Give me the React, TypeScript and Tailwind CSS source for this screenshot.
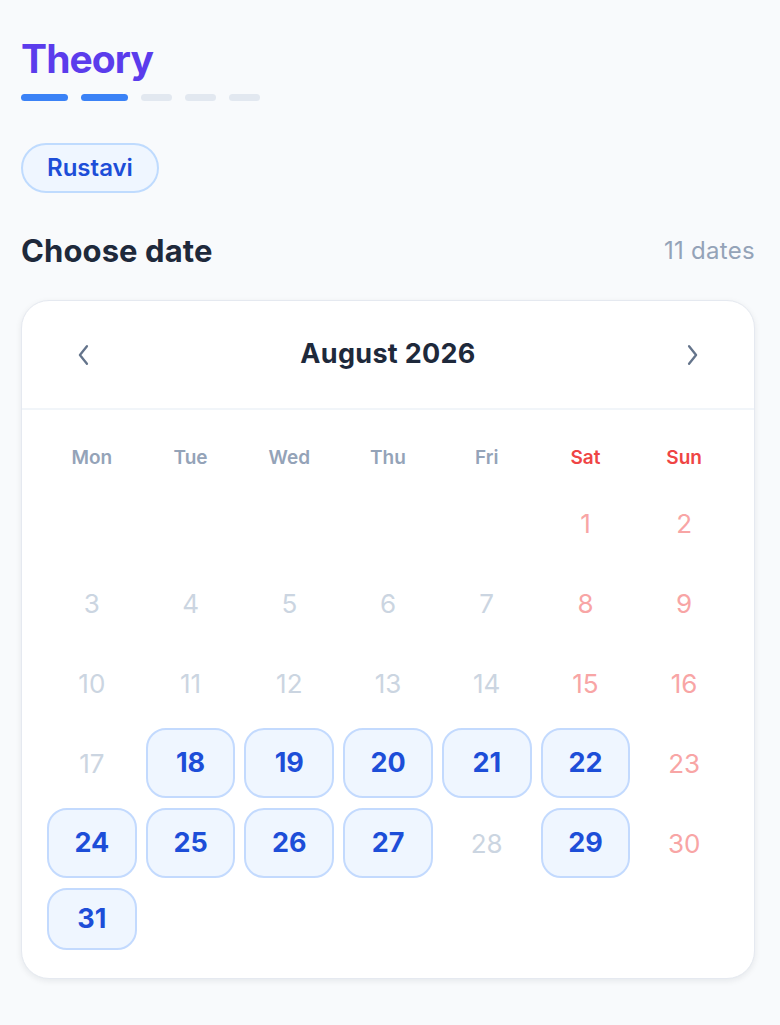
import React from "react";

const weekdays = ["Mon", "Tue", "Wed", "Thu", "Fri", "Sat", "Sun"];
const available = new Set([18, 19, 20, 21, 22, 24, 25, 26, 27, 29, 31]);

export default function App() {
  const cells: (number | null)[] = [null, null, null, null, null];
  for (let d = 1; d <= 31; d++) cells.push(d);
  return (
    <div
      className="min-h-[1025px] w-[780px] bg-[#f8fafc] pl-[21px] pr-[25px] pt-[36px]"
      style={{ fontFamily: "Inter, 'Noto Sans', sans-serif" }}
    >
      <h1 className="text-[39px] leading-[46px] font-bold tracking-[-0.9px] text-[#5b3cec]">Theory</h1>
      <div className="mt-[12px] flex gap-[13px]">
        <div className="h-[7px] w-[47px] rounded-full bg-[#3b82f6]" />
        <div className="h-[7px] w-[47px] rounded-full bg-[#3b82f6]" />
        <div className="h-[7px] w-[31px] rounded-full bg-[#e2e8f0]" />
        <div className="h-[7px] w-[31px] rounded-full bg-[#e2e8f0]" />
        <div className="h-[7px] w-[31px] rounded-full bg-[#e2e8f0]" />
      </div>
      <div className="mt-[42px] flex">
        <div className="flex h-[50px] items-center rounded-full border-2 border-[#bfdbfe] bg-[#eff6ff] px-[24px] text-[24px] font-semibold text-[#1d4ed8]">
          Rustavi
        </div>
      </div>
      <div className="mt-[38px] flex items-center justify-between">
        <h2 className="text-[31px] leading-[40px] font-bold tracking-[0.1px] text-[#1e293b]">Choose date</h2>
        <span className="text-[24px] tracking-[0.3px] text-[#94a3b8]">11 dates</span>
      </div>
      <div className="mt-[29px] rounded-[28px] border border-[#e5e9f0] bg-white shadow-[0_2px_6px_rgba(15,23,42,0.08)]">
        <div className="flex h-[109px] items-center justify-between border-b-2 border-[#f1f5f9] px-[40px]">
          <button className="flex h-[44px] w-[44px] items-center justify-center text-[#64748b]">
            <svg width="28" height="28" viewBox="0 0 24 24" fill="none" stroke="currentColor" strokeWidth="2" strokeLinecap="round" strokeLinejoin="round">
              <path d="M14.5 4.5l-6 7.5 6 7.5" />
            </svg>
          </button>
          <div className="text-[27px] font-bold tracking-[0.3px] text-[#1e293b]">August 2026</div>
          <button className="flex h-[44px] w-[44px] items-center justify-center text-[#64748b]">
            <svg width="28" height="28" viewBox="0 0 24 24" fill="none" stroke="currentColor" strokeWidth="2" strokeLinecap="round" strokeLinejoin="round">
              <path d="M9.5 4.5l6 7.5-6 7.5" />
            </svg>
          </button>
        </div>
        <div className="px-[25px] pt-[36px] pb-[28px]">
          <div className="grid grid-cols-7 gap-x-[9px]">
            {weekdays.map((w, i) => (
              <div
                key={w}
                className={
                  "text-center text-[19px] leading-[24px] font-semibold " +
                  (i >= 5 ? "text-[#ef4444]" : "text-[#94a3b8]")
                }
              >
                {w}
              </div>
            ))}
          </div>
          <div className="mt-[18px] grid grid-cols-7 gap-x-[9px] gap-y-[10px] [grid-template-rows:repeat(5,70px)_62px]">
            {cells.map((d, i) => {
              if (d === null) return <div key={"e" + i} />;
              const col = i % 7;
              const weekend = col >= 5;
              if (available.has(d)) {
                return (
                  <div
                    key={d}
                    className="flex items-center justify-center rounded-[20px] border-2 border-[#c3dafe] bg-[#eff6ff] text-[27px] font-bold text-[#1d4ed8]"
                  >
                    {d}
                  </div>
                );
              }
              return (
                <div
                  key={d}
                  className={
                    "flex items-center justify-center text-[26px] " +
                    (weekend ? "text-[#f8a5a5]" : "text-[#cbd5e1]")
                  }
                >
                  {d}
                </div>
              );
            })}
          </div>
        </div>
      </div>
    </div>
  );
}
